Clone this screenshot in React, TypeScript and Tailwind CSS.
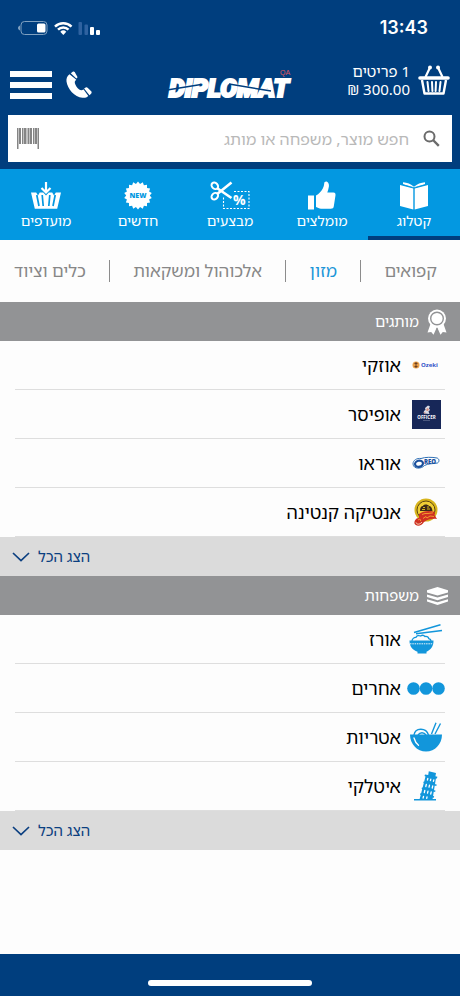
import { useState } from 'react'
import type { ReactNode } from 'react'
import clsx from 'clsx'

interface Entry {
  name: string
  logo: ReactNode
}

/* ---------- status bar ---------- */

function StatusBar() {
  return (
    <div dir="ltr" className="flex h-14 items-center justify-between pr-8 pl-[18px]">
      <svg width="82" height="16" viewBox="0 0 82 16" fill="white">
        <rect x="3" y="1.5" width="26" height="13" rx="3.5" fill="none" stroke="#7fa0c0" strokeWidth="1" />
        <path d="M2 5.5v5C.8 10 0 9 0 8s.8-2 2-2.500z" fill="#7fa0c0" />
        <rect x="19" y="3.500" width="8.500" height="9" rx="1.500" />
        <g fill="none" stroke="white" strokeWidth="2.500">
          <path d="M37 6.600a12 12 0 0 1 16.500 0" />
          <path d="M40 9.700a7.500 7.500 0 0 1 10.500 0" />
        </g>
        <path d="M42.300 11.700a4.300 4.300 0 0 1 6 0L45.300 15z" />
        <rect x="60.500" y="2" width="3.500" height="13" rx="1" fill="#2f62a0" />
        <rect x="66.500" y="4.500" width="3.500" height="10.500" rx="1" fill="#2f62a0" />
        <rect x="72" y="7" width="4" height="8" rx="1" />
        <rect x="78" y="10" width="4" height="5" rx="1" />
      </svg>
      <span className="font-['Inter',sans-serif] text-lg font-semibold text-white">13:43</span>
    </div>
  )
}

/* ---------- header icons ---------- */

function DiplomatLogo() {
  return (
    <svg width="126" height="34" viewBox="0 0 126 34" direction="ltr" role="img" aria-label="Diplomat">
      <text
        x="2"
        y="28"
        fill="white"
        stroke="white"
        strokeWidth="2.200"
        fontSize="25"
        fontWeight="900"
        fontStyle="italic"
        className="font-['Roboto',sans-serif]"
      >
        DIPLOMAT
      </text>
      <path d="M0 21 34 15.500M62 15 104 22" stroke="#003e7e" strokeWidth="1.500" />
      <text x="113" y="6" fontSize="7" fill="#e0575b" className="font-['Liberation_Sans',sans-serif]">
        QA
      </text>
    </svg>
  )
}

function PhoneIcon() {
  return (
    <svg width="26" height="28" viewBox="0 0 26 28" fill="white">
      <path d="M3.500 3.200C1 5 .2 7.500.5 10.500c1 7.500 8 15.500 16 16.300 2.500.2 4.500-.4 5.800-1.800l-4.700-6.500c-1.800.9-2.900 1-4.400-.1-2-1.500-3.600-3.700-4.300-6.200-.4-1.600.2-2.600 1.400-3.400z" />
      <path d="M4.800 2.300 6.700.8c.7-.5 1.500-.4 2 .3l2.500 4.300c.4.700.3 1.300-.3 1.700l-.6.500zM18.100 17.500l1.600-1c.7-.4 1.300-.3 1.900.3l3.600 3.500c.6.600.6 1.400.1 2.100l-1.800 1.900z" />
    </svg>
  )
}

function BasketIcon() {
  return (
    <svg width="32" height="30" viewBox="0 0 32 30" fill="none" stroke="white">
      <path d="M7.500 12 12 2.500M24.500 12 20 2.500" strokeWidth="2.200" />
      <circle cx="12" cy="2.500" r="2" fill="white" stroke="none" />
      <circle cx="20" cy="2.500" r="2" fill="white" stroke="none" />
      <path d="M2 13h28" strokeWidth="3.600" strokeLinecap="round" />
      <path d="M4 15l2.500 13.500h19L28 15" strokeWidth="2.400" strokeLinejoin="round" />
      <path d="M9.500 17l1 9M14 17l.4 9M18 17l-.4 9M22.500 17l-1 9" strokeWidth="2" strokeLinecap="round" />
    </svg>
  )
}

function BarcodeIcon() {
  return (
    <svg width="22" height="22" viewBox="0 0 22 22" fill="#858585">
      <path d="M0 0h1.500v21H0zM20.500 0H22v21h-1.500zM2 0h2v16H2zM5 0h1.500v16H5zM7 0h2.500v16H7zM10.500 0H12v16h-1.500zM12.500 0h2.500v16h-2.500zM16 0h1v16h-1zM17.500 0h2.500v16h-2.500z" />
    </svg>
  )
}

function SearchIcon() {
  return (
    <svg width="17" height="17" viewBox="0 0 17 17" fill="none" stroke="#6b6b6b" strokeWidth="2">
      <circle cx="6.500" cy="6.500" r="5" />
      <path d="M10 10l5.800 5.800" strokeWidth="2.400" />
    </svg>
  )
}

/* ---------- main nav icons ---------- */

function CatalogIcon() {
  return (
    <svg width="30" height="29" viewBox="0 0 30 29" fill="white">
      <path d="M1 4l13.300 3.500v21L1 25zM29 4 15.700 7.500v21L29 25z" />
      <path d="M4 1.200c4 .3 8 1.700 11 4.500 3-2.800 7-4.200 11-4.500v2L15 6.800 4 3.200z" />
      <path d="M3.500 3.600 15 6.700l11.500-3.100" fill="none" stroke="#0398e1" strokeWidth=".8" />
    </svg>
  )
}

function ThumbIcon() {
  return (
    <svg width="28" height="29" viewBox="0 0 28 29" fill="white">
      <rect x="0" y="14.500" width="6" height="14" />
      <path d="M8 14.500c3-1.500 5-4 6.800-7 .8-1.500 1.200-3 1.400-5 .1-1.500 1.500-2.300 2.800-1.700 1.600.8 2.200 2.700 1.900 4.800-.2 2-1 4-1.600 6h6.200c1.600 0 2.200 1.300 2 2.600l-1.700 11c-.3 1.800-1.200 2.500-3 2.500H13c-2 0-3.200-1.200-5-1.700z" />
    </svg>
  )
}

function SaleIcon() {
  return (
    <svg width="40" height="29" viewBox="0 0 40 29" fill="none" stroke="white" direction="ltr">
      <ellipse cx="4.800" cy="4.800" rx="2.900" ry="3.600" strokeWidth="2" transform="rotate(-45 4.800 4.800)" />
      <ellipse cx="4.800" cy="15.200" rx="2.900" ry="3.600" strokeWidth="2" transform="rotate(45 4.800 15.200)" />
      <path d="M7.200 7.200 21.500 17M7.200 13 21.500 1.500" strokeWidth="2.600" />
      <path d="M24 10.500h15v17H13.500V15" strokeWidth="1.100" strokeDasharray="2 1.500" />
      <text x="23" y="24" fontSize="14" fontWeight="700" fill="white" stroke="none" className="font-['Open_Sans',sans-serif]">
        %
      </text>
    </svg>
  )
}

function NewIcon() {
  // 18 pointed badge
  const points = Array.from({ length: 36 }, (_, i) => {
    const r = i % 2 ? 11.800 : 14
    const a = (i * Math.PI) / 18
    return `${14 + r * Math.sin(a)},${14.500 - r * Math.cos(a)}`
  }).join(' ')
  return (
    <svg width="28" height="29" viewBox="0 0 28 29" direction="ltr">
      <polygon points={points} fill="white" />
      <text x="14" y="17" fontSize="7" fontWeight="800" fill="#0398e1" textAnchor="middle" className="font-['Open_Sans',sans-serif]">
        NEW
      </text>
    </svg>
  )
}

function FavoritesIcon() {
  return (
    <svg width="30" height="29" viewBox="0 0 30 29" fill="white">
      <path d="M0 11.500h5.200l1.800 3 1.800-3h3.400l2.800 3 2.800-3h3.400l1.800 3 1.800-3H30l-3.800 16.300H3.800z" />
      <path d="M5.800 14l2.200 11M11.200 14l1 11M18.800 14l-1 11M24.200 14 22 25" fill="none" stroke="#0398e1" strokeWidth="1.700" />
      <path d="M15 1v10M10.500 7l4.500 4.500L19.500 7" fill="none" stroke="white" strokeWidth="2.200" />
    </svg>
  )
}

/* ---------- section icons ---------- */

function MedalIcon() {
  return (
    <svg width="20" height="26" viewBox="0 0 20 26" fill="white">
      <path d="M3.500 15 .5 23.500l3.700-.6 2.300 2.800L10 18l3.500 7.700 2.300-2.800 3.700.6-3-8.500z" />
      <circle cx="10" cy="9.500" r="9" />
      <circle cx="10" cy="9.500" r="6.300" fill="none" stroke="#929395" strokeWidth="1.400" />
      <path d="M10 19v6" stroke="#929395" strokeWidth="1" />
    </svg>
  )
}

function LayersIcon() {
  return (
    <svg width="21" height="18" viewBox="0 0 21 18" fill="white">
      <path d="M10.500 0 21 3.200v2.300L10.500 8.500 0 5.500V3.200z" />
      <path d="M0 7.500l10.500 3 10.500-3V10l-10.500 3.200L0 10z" />
      <path d="M0 12.200l10.500 3 10.500-3v2.400L10.500 18 0 14.600z" />
    </svg>
  )
}

/* ---------- brand logos ---------- */

function OzekiLogo() {
  return (
    <svg width="28" height="10" viewBox="0 0 28 10" direction="ltr">
      <circle cx="4" cy="5" r="3.500" fill="#e9a04a" />
      <path d="M4 2v6M2.500 3.500h3M2.500 6.500h3" stroke="#6b3f22" strokeWidth="1" />
      <text x="9" y="7" fontSize="6" fontWeight="700" fill="#3151c8" className="font-['Open_Sans',sans-serif]">
        Ozeki
      </text>
    </svg>
  )
}

function OfficerLogo() {
  return (
    <svg width="29" height="29" viewBox="0 0 29 29" direction="ltr">
      <rect width="29" height="29" fill="#172758" />
      <path d="M12 13.500c-.8-1.500 0-3 1.500-3.500l-.5-2 3-2.500 2 1-1 1.800 1 1.700-1.500 1.500 1 2.500z" fill="#d9dbe6" />
      <path d="M15 8l2 1-1 2-2-.5zM11.500 12l2 .5-.5 1.500z" fill="#d98a78" />
      <text x="14.500" y="18.500" fontSize="4.500" fontWeight="700" fill="white" textAnchor="middle" className="font-['Open_Sans',sans-serif]">
        OFFICER
      </text>
      <path d="M11 20.500h7" stroke="#6d789b" strokeWidth=".6" />
    </svg>
  )
}

function OreoLogo() {
  return (
    <svg width="28" height="14" viewBox="0 0 28 14" direction="ltr">
      <path
        d="M1 8C1 4 5 2 9 2.500 13 1 20 1 25 2c2.500.7 2.500 4 .5 5-4 .8-10 .5-13 2.500-3 3.500-11 4-11.500-1.500z"
        fill="white"
        stroke="#2f70b5"
        strokeWidth="1"
      />
      <ellipse cx="7" cy="7.700" rx="4" ry="3" fill="none" stroke="#1a4f9c" strokeWidth="2.200" transform="rotate(-15 7 7.700)" />
      <text x="12" y="7.500" fontSize="6" fontWeight="800" fill="#1a4f9c" className="font-['Open_Sans',sans-serif]">
        REO
      </text>
    </svg>
  )
}

function CantinaLogo() {
  return (
    <svg width="26" height="29" viewBox="0 0 26 29">
      <circle cx="13" cy="12" r="11.500" fill="#d8b51e" />
      <circle cx="13" cy="12" r="9" fill="#f0cf35" stroke="#5c4612" strokeWidth="1" />
      <path d="M7 13c0-3 1-5 3-5 .5-2 5-2 6 0 2 0 3 2 3.500 5z" fill="#3c2a18" />
      <path d="M10 9.500h2M14 9h2M9 11.500h3M14 11h3" stroke="#d8b51e" strokeWidth="1" />
      <path d="M6 16c4-3 10-4 16-2l-.5 3 2.500 4c-5-.5-9 0-13 3-2 4-8 5-9.500 1.500C1 23 3 19.500 6 20z" fill="#cf3022" />
      <path d="M9 16.500l3-1 3 0 5-.7M10 20.500l3-2 1 1.500 3-2 4 .5M5 22c2-1.500 3-.5 2.500 1" fill="none" stroke="#f5a52e" strokeWidth=".9" />
      <path d="M3 24.500c1 2.500 4 2 6-.5" fill="none" stroke="#f6e3c4" strokeWidth="1" />
    </svg>
  )
}

/* ---------- family icons ---------- */

function RiceIcon() {
  return (
    <svg width="34" height="30" viewBox="0 0 34 30" className="fill-[#1296db]">
      <path d="M5 8.500 31.500.8M7 9.800 33 6.500" stroke="#1296db" strokeWidth="1.500" />
      <path d="M3 17c0-2 2-3.800 4-3.600.6-1.800 3-2.300 4.500-1.400 1.500-1 3.500-.7 4.500.5 2-.3 3.500.8 3.800 2.200 1.200.3 2.200 1.300 2.200 2.300" fill="none" stroke="#1296db" strokeWidth="1.300" />
      <path d="M.5 16.500h24c.2 6-3 9.500-7 11.200V29.500h-9v-1.800C3.500 26 .5 22.500.5 16.500z" />
      <path d="M1 19.800h23" stroke="white" strokeWidth=".9" strokeDasharray="1.500 .8" />
    </svg>
  )
}

function OthersIcon() {
  return (
    <svg width="38" height="13" viewBox="0 0 38 13" className="fill-[#1296db]">
      <circle cx="6.500" cy="6.500" r="6.300" />
      <circle cx="19" cy="6.500" r="6.300" />
      <circle cx="31.500" cy="6.500" r="6.300" />
    </svg>
  )
}

function NoodlesIcon() {
  return (
    <svg width="32" height="30" viewBox="0 0 32 30" className="fill-[#1296db]">
      <path d="M0 12.500h32C32 22 25 29.500 16 29.500S0 22 0 12.500z" />
      <path d="M4 13c1-7.500 12-8 14.500 0M8 13c2-3 6-3 8 0M21.500 12 26 .8M25 12 30.500 1.500" fill="none" stroke="#1296db" strokeWidth="1.400" />
      <path d="M4 16c.8 3 2.300 5.500 4.500 7.300" fill="none" stroke="white" strokeWidth="1.300" strokeLinecap="round" />
    </svg>
  )
}

function PisaIcon() {
  return (
    <svg width="24" height="30" viewBox="0 0 24 30" className="fill-[#1296db]">
      <path d="M0 28h22v1.500H0z" />
      <path d="M14.800.3l7.200 1.700-.6 3.200 2 .5-.5 1.800-1 0L18.500 28.500H5.500L11.500 5.500l-1-.4.5-1.700 3.200.7z" />
      <path d="M9.500 11.300l13 3M7.800 17.300l13.500 3M6.200 23l13.800 3" stroke="#1296db" strokeWidth="1.500" />
      <path
        d="M13.800 7.500l-.4 1.500M16.800 8.200l-.4 1.500M19.800 8.900l-.4 1.500M12.300 13.500l-.5 2M15.500 14.200l-.5 2M18.700 15l-.5 2M10.800 19.500l-.5 2M14 20.200l-.5 2M17.200 21l-.5 2M9.500 25.500l-.4 1.500M13 26l-.3 1.300"
        stroke="white"
        strokeWidth="1.300"
        strokeLinecap="round"
      />
    </svg>
  )
}

const navItems = [
  { label: 'קטלוג', icon: <CatalogIcon /> },
  { label: 'מומלצים', icon: <ThumbIcon /> },
  { label: 'מבצעים', icon: <SaleIcon /> },
  { label: 'חדשים', icon: <NewIcon /> },
  { label: 'מועדפים', icon: <FavoritesIcon /> }
]

const categories = ['קפואים', 'מזון', 'אלכוהול ומשקאות', 'כלים וציוד']

const brands: Entry[] = [
  { name: 'אוזקי', logo: <OzekiLogo /> },
  { name: 'אופיסר', logo: <OfficerLogo /> },
  { name: 'אוראו', logo: <OreoLogo /> },
  { name: 'אנטיקה קנטינה', logo: <CantinaLogo /> }
]

const families: Entry[] = [
  { name: 'אורז', logo: <RiceIcon /> },
  { name: 'אחרים', logo: <OthersIcon /> },
  { name: 'אטריות', logo: <NoodlesIcon /> },
  { name: 'איטלקי', logo: <PisaIcon /> }
]

function Section({ title, icon, entries }: { title: string; icon: ReactNode; entries: Entry[] }) {
  return (
    <section>
      <h2 className="flex h-[39px] items-center gap-[7px] bg-[#929395] px-3 text-[15px] text-white">
        <span className="flex w-[22px] justify-center">{icon}</span>
        {title}
      </h2>
      <ul className="px-[15px]">
        {entries.map((entry) => (
          <li key={entry.name} className="border-b border-[#dedede]">
            <a href="#" className="flex h-12 items-center gap-[6px] text-lg text-black">
              <span className="flex w-[38px] justify-center">{entry.logo}</span>
              {entry.name}
            </a>
          </li>
        ))}
      </ul>
      <button className="flex h-[39px] w-full items-center justify-end gap-2 bg-[#dbdbdb] px-3 text-[15px] text-[#0b3f80]">
        הצג הכל
        <svg width="18" height="10" viewBox="0 0 18 10" fill="none" stroke="currentColor" strokeWidth="1.700">
          <path d="M1 1l8 7.500L17 1" />
        </svg>
      </button>
    </section>
  )
}

export default function App() {
  const [activeNav, setActiveNav] = useState('קטלוג')
  const [category, setCategory] = useState('מזון')

  return (
    <div dir="rtl" className="flex min-h-screen flex-col bg-[#fdfdfd] font-['Noto_Sans','Noto_Sans_Hebrew','DejaVu_Sans',sans-serif]">
      <header className="bg-[#003e7e] pb-[7px]">
        <StatusBar />
        <div className="grid h-[59px] grid-cols-[1fr_auto_1fr] items-center px-[10px]">
          <a href="#" className="flex items-center gap-2 pb-3 text-[15px] leading-[18px] text-white">
            <BasketIcon />
            <span className="flex flex-col">
              <span>1 פריטים</span>
              <span dir="ltr">₪ 300.00</span>
            </span>
          </a>
          <DiplomatLogo />
          <div className="flex items-center justify-end gap-[14px] pb-px">
            <button aria-label="טלפון">
              <PhoneIcon />
            </button>
            <button aria-label="תפריט" className="flex w-[42px] flex-col gap-[5px]">
              <span className="h-[6px] w-full bg-white" />
              <span className="h-[6px] w-full bg-white" />
              <span className="h-[6px] w-full bg-white" />
            </button>
          </div>
        </div>
        <div className="mx-2 flex h-[47px] items-center gap-[14px] bg-white pr-3 pl-[9px]">
          <SearchIcon />
          <input
            type="text"
            aria-label="חיפוש"
            placeholder="חפש מוצר, משפחה או מותג"
            className="min-w-0 flex-1 text-base outline-none placeholder:text-[#b9b9b9]"
          />
          <button aria-label="ברקוד">
            <BarcodeIcon />
          </button>
        </div>
      </header>

      {/* main nav */}
      <nav className="grid grid-cols-5 bg-[#0398e1]">
        {navItems.map((item) => (
          <button
            key={item.label}
            onClick={() => setActiveNav(item.label)}
            className={clsx(
              'flex h-[71px] flex-col items-center gap-px border-b-4 pt-3 text-sm text-white',
              activeNav === item.label ? 'border-[#003e7e]' : 'border-transparent'
            )}
          >
            {item.icon}
            {item.label}
          </button>
        ))}
      </nav>

      {/* categories */}
      <nav className="flex h-[62px] items-center justify-between overflow-hidden pr-[23px] pl-[14px]">
        {categories.map((name, i) => (
          <div key={name} className="contents">
            {i > 0 && <span className="h-[22px] w-px bg-[#8c8c8c]" />}
            <button
              onClick={() => setCategory(name)}
              className={clsx('text-[17px] whitespace-nowrap', category === name ? 'text-[#1c96d8]' : 'text-[#878787]')}
            >
              {name}
            </button>
          </div>
        ))}
      </nav>

      <main className="flex-1">
        <Section title="מותגים" icon={<MedalIcon />} entries={brands} />
        <Section title="משפחות" icon={<LayersIcon />} entries={families} />
      </main>

      <footer className="flex h-[42px] items-end justify-center bg-[#003e7e] pb-[10px]">
        <div className="h-[6px] w-[164px] rounded-full bg-white" />
      </footer>
    </div>
  )
}
